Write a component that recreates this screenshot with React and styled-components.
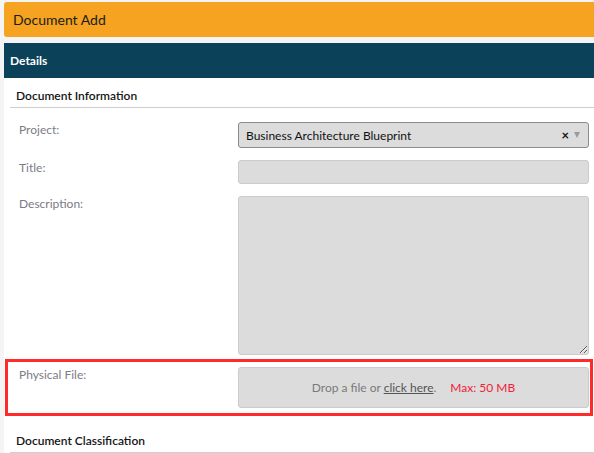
import React from 'react'
import styled, { createGlobalStyle } from 'styled-components'

const GlobalStyle = createGlobalStyle`
  body {
    margin: 0;
    background: #f4f4f4;
    font-family: Lato, "Open Sans", "Liberation Sans", sans-serif;
  }
`

const Page = styled.div`
  width: 594px;
  padding: 2px 0 0 4px;
  box-sizing: border-box;
`

const TitleBar = styled.div`
  height: 35px;
  display: flex;
  align-items: center;
  padding-left: 9px;
  background: #f5a320;
  border-radius: 3px 0 0 3px;
  font-size: 14px;
  color: #1c1c1c;
`

const Panel = styled.div`
  margin-top: 6px;
  background: #fff;
  padding-bottom: 20px;
`

const PanelHeader = styled.div`
  height: 35px;
  display: flex;
  align-items: center;
  padding-left: 6px;
  background: #0c4259;
  color: #fff;
  font-size: 12px;
  font-weight: bold;
`

const SectionTitle = styled.div`
  margin: ${p => p.$gap || 0}px 0 0 6px;
  padding: 10px 0 3px 6px;
  line-height: 16px;
  font-size: 12px;
  font-weight: 600;
  color: #151515;
  border-bottom: 1px solid #cfcfcf;
`

const Fields = styled.div`
  display: flex;
  flex-direction: column;
  gap: 12px;
  padding-top: 14px;
`

const Row = styled.div`
  display: grid;
  grid-template-columns: 219px 1fr;
  padding: 0 5px 0 15px;
`

const HighlightRow = styled(Row)`
  margin: -8px 1px 0 1px;
  padding: 5px 1px 5px 11px;
  border: 3px solid #ff2a2a;
`

const Label = styled.div`
  font-size: 12px;
  line-height: 16px;
  color: #7b7b86;
`

const Box = styled.div`
  box-sizing: border-box;
  height: ${p => p.$h}px;
  background: #dcdcdc;
  border: 1px solid #cbcbcb;
  border-radius: 3px;
`

const Select = styled(Box)`
  display: flex;
  align-items: center;
  padding: 0 8px 0 7px;
  border-color: #8c8c8c;
  font-size: 12px;
  color: #111;
`

const SelectText = styled.span`
  flex: 1;
`

const Clear = styled.span`
  font-size: 13px;
  font-weight: bold;
  color: #111;
  margin-right: 5px;
  line-height: 1;
`

const Caret = styled.span`
  width: 0;
  height: 0;
  border-left: 3.5px solid transparent;
  border-right: 3.5px solid transparent;
  border-top: 6px solid #9a9a9a;
`

const TextArea = styled.textarea`
  display: block;
  box-sizing: border-box;
  width: 100%;
  height: 159px;
  margin: 0;
  background: #dcdcdc;
  border: 1px solid #cbcbcb;
  border-radius: 3px;
  resize: vertical;
  outline: none;
`

const Drop = styled(Box)`
  display: flex;
  align-items: center;
  justify-content: center;
  font-size: 12px;
  color: #7a7a7a;
`

const Link = styled.span`
  text-decoration: underline;
  color: #555;
`

const Max = styled.span`
  margin-left: 14px;
  color: #f2203a;
`

export default function App() {
  return (
    <Page>
      <GlobalStyle />
      <TitleBar>Document Add</TitleBar>
      <Panel>
        <PanelHeader>Details</PanelHeader>
        <SectionTitle>Document Information</SectionTitle>
        <Fields>
          <Row>
            <Label>Project:</Label>
            <Select $h={26}>
              <SelectText>Business Architecture Blueprint</SelectText>
              <Clear>×</Clear>
              <Caret />
            </Select>
          </Row>
          <Row>
            <Label>Title:</Label>
            <Box $h={24} />
          </Row>
          <Row>
            <Label>Description:</Label>
            <TextArea readOnly />
          </Row>
          <HighlightRow>
            <Label>Physical File:</Label>
            <Drop $h={41}>
              <span>Drop a file or <Link>click here</Link>.</span>
              <Max>Max: 50 MB</Max>
            </Drop>
          </HighlightRow>
        </Fields>
        <SectionTitle $gap={7}>Document Classification</SectionTitle>
      </Panel>
    </Page>
  )
}
